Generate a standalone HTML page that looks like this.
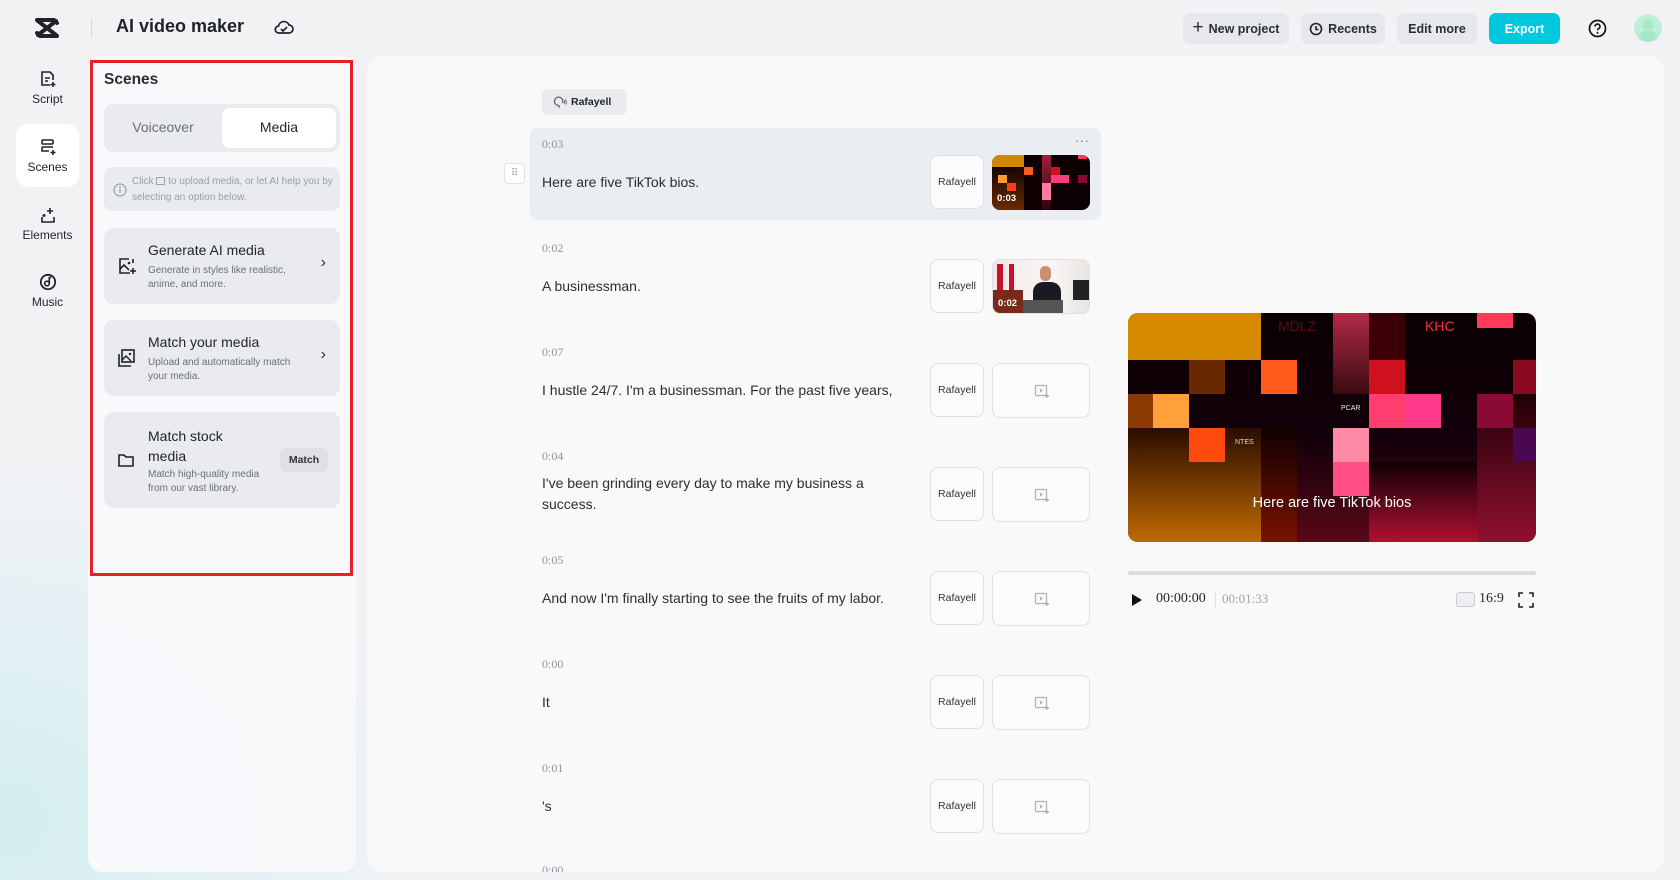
<!DOCTYPE html>
<html><head><meta charset="utf-8"><style>
*{box-sizing:border-box;margin:0;padding:0}
body{width:1680px;height:880px;overflow:hidden;font-family:"Liberation Sans",sans-serif;color:#1f2329;
background:radial-gradient(ellipse 420px 360px at 0px 820px,#d3eef2 0%,rgba(211,238,242,0) 100%),#f2f2f5;position:relative}
.abs{position:absolute}
.btn{position:absolute;top:13px;height:31px;border-radius:7px;background:#e6e8ec;font-size:12.5px;font-weight:bold;color:#2a2e33;display:flex;align-items:center;justify-content:center;gap:5px}
.nav{position:absolute;left:16px;width:63px;text-align:center;font-size:12px;color:#1f2329}
.nav svg{display:block;margin:0 auto 4px}
.card{position:absolute;left:104px;width:236px;background:#e9ebef;border-radius:10px}
.card .t{position:absolute;left:44px;font-size:14px;color:#1f2329}
.card .d{position:absolute;left:44px;font-size:10px;color:#6b7075;line-height:14px}
.card svg.ic{position:absolute;left:13px}
.card .ch{position:absolute;right:14px;font-size:16px;color:#333}
.row{position:absolute;left:530px;width:571px;height:92px;border-radius:8px}
.row .tm{position:absolute;left:12px;top:9px;font-family:"Liberation Serif",serif;font-size:12px;color:#8f959e}
.row .tx{position:absolute;left:12px;font-size:14px;color:#2a2e33;line-height:21px;width:380px}
.row .rf{position:absolute;left:400px;top:27px;width:54px;height:54px;border:1px solid #dfe1e5;border-radius:8px;background:#fbfbfc;font-size:10.5px;color:#333;display:flex;align-items:center;justify-content:center}
.row .th{position:absolute;left:462px;top:27px;width:98px;height:55px;border:1px solid #dfe1e5;border-radius:8px;background:#fbfbfc;overflow:hidden}
.c{position:absolute}
</style></head><body>

<svg class="abs" style="left:34px;top:17px" width="26" height="22" viewBox="0 0 26 22"><path d="M3 3h17l3 3M23 19H6l-3-3M4 4l18 14M22 4L4 18" stroke="#1f2329" stroke-width="4" fill="none" stroke-linecap="round"/></svg>
<div class="abs" style="left:91px;top:18px;width:1px;height:20px;background:#d8d9dd"></div>
<div class="abs" style="left:116px;top:16px;font-size:18px;font-weight:bold">AI video maker</div>
<svg class="abs" style="left:274px;top:18px" width="20" height="18" viewBox="0 0 20 18"><path d="M5 15h10a4 4 0 0 0 0-8 5.5 5.5 0 0 0-10.5 1A3.5 3.5 0 0 0 5 15z" fill="none" stroke="#1f2329" stroke-width="1.7"/><path d="M7 11l2 2 4-4" fill="none" stroke="#1f2329" stroke-width="1.7"/></svg>

<div class="btn" style="left:1183px;width:106px"><span style="font-size:19px;font-weight:normal;margin-top:-2px">+</span>New project</div>
<div class="btn" style="left:1301px;width:84px"><svg width="14" height="14" viewBox="0 0 14 14"><circle cx="7" cy="7" r="5.5" fill="none" stroke="#1f2329" stroke-width="1.6"/><path d="M7 4v3.5h2.5" stroke="#1f2329" stroke-width="1.6" fill="none"/></svg>Recents</div>
<div class="btn" style="left:1397px;width:80px">Edit more</div>
<div class="btn" style="left:1489px;width:71px;background:#00c8df;color:#fff">Export</div>
<svg class="abs" style="left:1588px;top:19px" width="19" height="19" viewBox="0 0 19 19"><circle cx="9.5" cy="9.5" r="8" fill="none" stroke="#111" stroke-width="1.7"/><path d="M7 7.5a2.5 2.5 0 1 1 3.3 2.4c-.6.3-.8.7-.8 1.4" fill="none" stroke="#111" stroke-width="1.6"/><circle cx="9.5" cy="13.8" r="1" fill="#111"/></svg>
<div class="abs" style="left:1634px;top:14px;width:28px;height:28px;border-radius:50%;background:#bdeed7;overflow:hidden"><div class="c" style="left:9px;top:6px;width:10px;height:9px;border-radius:3px;background:#a5e6c6"></div><div class="c" style="left:5px;top:16px;width:18px;height:14px;border-radius:9px 9px 0 0;background:#a5e6c6"></div></div>

<div class="nav" style="top:70px"><svg width="18" height="18" viewBox="0 0 18 18"><path d="M11 15H3V2h8l3 3v5" fill="none" stroke="#1f2329" stroke-width="1.6"/><path d="M6 8h5M6 11h3M14 12v5M11.5 14.5h5" stroke="#1f2329" stroke-width="1.6"/></svg>Script</div>
<div class="abs" style="left:16px;top:124px;width:63px;height:63px;background:#fff;border-radius:12px"></div>
<div class="nav" style="top:138px"><svg width="18" height="18" viewBox="0 0 18 18"><rect x="3" y="2" width="11" height="4" rx="1" fill="none" stroke="#1f2329" stroke-width="1.6"/><path d="M3 9h11M3 9v4h7M14 12v5M11.5 14.5h5" stroke="#1f2329" stroke-width="1.6" fill="none"/></svg>Scenes</div>
<div class="nav" style="top:206px"><svg width="18" height="18" viewBox="0 0 18 18"><path d="M3 11v5h12v-5" fill="none" stroke="#1f2329" stroke-width="1.6"/><path d="M11 2v6M8 5h6M5 8v3M3.5 9.5h3" stroke="#1f2329" stroke-width="1.6"/></svg>Elements</div>
<div class="nav" style="top:273px"><svg width="18" height="18" viewBox="0 0 18 18"><circle cx="9" cy="9" r="7.2" fill="none" stroke="#1f2329" stroke-width="1.8"/><circle cx="8" cy="10.5" r="2.3" fill="none" stroke="#1f2329" stroke-width="1.6"/><path d="M10.3 10.5V4.5h2" fill="none" stroke="#1f2329" stroke-width="1.6"/></svg>Music</div>

<div class="abs" style="left:88px;top:56px;width:268px;height:816px;background:rgba(250,250,252,0.93);border-radius:14px"></div>
<div class="abs" style="left:90px;top:60px;width:263px;height:516px;border:3px solid #e8202a"></div>
<div class="abs" style="left:104px;top:71px;font-size:15.5px;font-weight:bold;color:#2a2e33">Scenes</div>
<div class="abs" style="left:104px;top:104px;width:236px;height:48px;background:#e9ebef;border-radius:10px"></div>
<div class="abs" style="left:222px;top:108px;width:114px;height:40px;background:#fff;border-radius:8px"></div>
<div class="abs" style="left:104px;top:119px;width:118px;text-align:center;font-size:14px;color:#6b7075">Voiceover</div>
<div class="abs" style="left:222px;top:119px;width:114px;text-align:center;font-size:14px;color:#1f2329">Media</div>

<div class="abs" style="left:104px;top:167px;width:236px;height:44px;background:#e9ebef;border-radius:8px"></div>
<svg class="abs" style="left:113px;top:183px" width="14" height="14" viewBox="0 0 14 14"><circle cx="7" cy="7" r="6" fill="none" stroke="#9aa0a6" stroke-width="1.2"/><path d="M7 6v4" stroke="#9aa0a6" stroke-width="1.3"/><circle cx="7" cy="4.2" r=".8" fill="#9aa0a6"/></svg>
<div class="abs" style="left:132px;top:174px;font-size:10px;color:#9aa0a6;line-height:16px;width:205px">Click <span style="display:inline-block;width:9px;height:8px;border:1px solid #9aa0a6;border-radius:1px;vertical-align:-1px"></span> to upload media, or let AI help you by selecting an option below.</div>

<div class="card" style="top:228px;height:76px">
<svg class="ic" style="top:28px" width="20" height="20" viewBox="0 0 20 20"><path d="M12 3H3v14h10" fill="none" stroke="#1f2329" stroke-width="1.6"/><path d="M3 13l4-4 5 5" fill="none" stroke="#1f2329" stroke-width="1.6"/><circle cx="12" cy="7" r="1.3" fill="#1f2329"/><path d="M16 12v6M13 15h6M16 3v4" stroke="#1f2329" stroke-width="1.6"/></svg>
<div class="t" style="top:14px">Generate AI media</div><div class="d" style="top:36px">Generate in styles like realistic,<br>anime, and more.</div><div class="ch" style="top:26px">›</div></div>

<div class="card" style="top:320px;height:76px">
<svg class="ic" style="top:28px" width="20" height="20" viewBox="0 0 20 20"><rect x="5" y="2" width="12" height="12" fill="none" stroke="#1f2329" stroke-width="1.6"/><path d="M2 6v12h12" fill="none" stroke="#1f2329" stroke-width="1.6"/><path d="M5 12l4-4 5 5" fill="none" stroke="#1f2329" stroke-width="1.5"/><circle cx="13" cy="6" r="1.2" fill="#1f2329"/></svg>
<div class="t" style="top:14px">Match your media</div><div class="d" style="top:36px">Upload and automatically match<br>your media.</div><div class="ch" style="top:26px">›</div></div>

<div class="card" style="top:412px;height:96px">
<svg class="ic" style="top:40px" width="18" height="16" viewBox="0 0 18 16"><path d="M2 3h5l2 2h7v9H2z" fill="none" stroke="#1f2329" stroke-width="1.6"/></svg>
<div class="t" style="top:14px;line-height:20px">Match stock<br>media</div><div class="d" style="top:56px">Match high-quality media<br>from our vast library.</div>
<div class="abs" style="left:176px;top:36px;width:48px;height:24px;border-radius:6px;background:#dee0e4;font-size:10.5px;font-weight:bold;display:flex;align-items:center;justify-content:center;color:#333">Match</div></div>

<div class="abs" style="left:367px;top:56px;width:1297px;height:816px;background:#f9f9fa;border-radius:16px"></div>
<div class="abs" style="left:542px;top:89px;width:85px;height:26px;background:#e9ebef;border-radius:6px;font-size:10.5px;font-weight:bold;display:flex;align-items:center;gap:4px;padding-left:11px"><svg width="14" height="13" viewBox="0 0 14 13"><path d="M6 12V9.5A4.2 4.2 0 1 1 9.5 7" fill="none" stroke="#555" stroke-width="1.1"/><path d="M11 4.5q1 1.5 0 3M12.5 3.5q1.6 2.5 0 5" fill="none" stroke="#555" stroke-width=".9"/></svg>Rafayell</div>

<div class="abs" style="left:504px;top:163px;width:21px;height:21px;border:1px solid #dfe1e5;border-radius:4px;background:#fff;font-size:10px;color:#999;text-align:center;line-height:19px">⠿</div>

<div class="row" style="top:128px;background:#eaedf1">
<div class="tm">0:03</div><div class="abs" style="right:12px;top:4px;color:#888;font-size:14px">···</div>
<div class="tx" style="top:44px">Here are five TikTok bios.</div><div class="rf">Rafayell</div>
<div class="th" style="border:none;background:#0c0002">
<div class="c" style="left:0;top:0;width:32px;height:12px;background:#d08900"></div>
<div class="c" style="left:0;top:12px;width:32px;height:43px;background:linear-gradient(#150500,#6a2a00)"></div>
<div class="c" style="left:6px;top:20px;width:9px;height:8px;background:#ff9c30"></div>
<div class="c" style="left:15px;top:28px;width:9px;height:8px;background:#ff4010"></div>
<div class="c" style="left:32px;top:12px;width:9px;height:8px;background:#ff5a1a"></div>
<div class="c" style="left:50px;top:0;width:9px;height:55px;background:linear-gradient(#a0203a,#300010)"></div>
<div class="c" style="left:50px;top:28px;width:9px;height:17px;background:#ff7ca0"></div>
<div class="c" style="left:59px;top:20px;width:18px;height:8px;background:#ff3a80"></div>
<div class="c" style="left:59px;top:12px;width:9px;height:8px;background:#d0101e"></div>
<div class="c" style="left:86px;top:20px;width:9px;height:8px;background:#8a0a35"></div>
<div class="c" style="left:86px;top:0;width:9px;height:4px;background:#ff3a5a"></div>
<div class="abs" style="left:5px;top:38px;color:#fff;font-size:9.5px;font-weight:bold">0:03</div></div></div>

<div class="row" style="top:232px"><div class="tm">0:02</div><div class="tx" style="top:44px">A businessman.</div><div class="rf">Rafayell</div>
<div class="th" style="background:linear-gradient(90deg,#f0e8e8,#faf6f4 60%,#e8e4e2)">
<div class="c" style="left:4px;top:4px;width:6px;height:40px;background:#c8102a"></div>
<div class="c" style="left:16px;top:4px;width:5px;height:40px;background:#c8102a"></div>
<div class="c" style="left:0;top:30px;width:30px;height:25px;background:#7a2a1a"></div>
<div class="c" style="left:40px;top:22px;width:28px;height:33px;background:#1a1a22;border-radius:10px 10px 0 0"></div>
<div class="c" style="left:47px;top:6px;width:11px;height:15px;background:#c89070;border-radius:5px"></div>
<div class="c" style="left:30px;top:40px;width:40px;height:15px;background:#555"></div>
<div class="c" style="left:80px;top:20px;width:18px;height:20px;background:#222"></div>
<div class="abs" style="left:5px;top:38px;color:#fff;font-size:9.5px;font-weight:bold">0:02</div></div></div>

<div class="row" style="top:336px"><div class="tm">0:07</div><div class="tx" style="top:44px">I hustle 24/7. I'm a businessman. For the past five years,</div><div class="rf">Rafayell</div><div class="th"><svg class="abs" style="left:41px;top:20px" width="16" height="15" viewBox="0 0 16 15"><rect x="1.5" y="1.5" width="11" height="10" rx="1" fill="none" stroke="#aab0b6" stroke-width="1.2"/><path d="M6 4.5l3 2-3 2z" fill="#aab0b6"/><path d="M13 10v4M11 12h4" stroke="#aab0b6" stroke-width="1.2"/></svg></div></div>

<div class="row" style="top:440px"><div class="tm">0:04</div><div class="tx" style="top:33px;width:345px">I've been grinding every day to make my business a success.</div><div class="rf">Rafayell</div><div class="th"><svg class="abs" style="left:41px;top:20px" width="16" height="15" viewBox="0 0 16 15"><rect x="1.5" y="1.5" width="11" height="10" rx="1" fill="none" stroke="#aab0b6" stroke-width="1.2"/><path d="M6 4.5l3 2-3 2z" fill="#aab0b6"/><path d="M13 10v4M11 12h4" stroke="#aab0b6" stroke-width="1.2"/></svg></div></div>

<div class="row" style="top:544px"><div class="tm">0:05</div><div class="tx" style="top:44px">And now I'm finally starting to see the fruits of my labor.</div><div class="rf">Rafayell</div><div class="th"><svg class="abs" style="left:41px;top:20px" width="16" height="15" viewBox="0 0 16 15"><rect x="1.5" y="1.5" width="11" height="10" rx="1" fill="none" stroke="#aab0b6" stroke-width="1.2"/><path d="M6 4.5l3 2-3 2z" fill="#aab0b6"/><path d="M13 10v4M11 12h4" stroke="#aab0b6" stroke-width="1.2"/></svg></div></div>

<div class="row" style="top:648px"><div class="tm">0:00</div><div class="tx" style="top:44px">It</div><div class="rf">Rafayell</div><div class="th"><svg class="abs" style="left:41px;top:20px" width="16" height="15" viewBox="0 0 16 15"><rect x="1.5" y="1.5" width="11" height="10" rx="1" fill="none" stroke="#aab0b6" stroke-width="1.2"/><path d="M6 4.5l3 2-3 2z" fill="#aab0b6"/><path d="M13 10v4M11 12h4" stroke="#aab0b6" stroke-width="1.2"/></svg></div></div>

<div class="row" style="top:752px"><div class="tm">0:01</div><div class="tx" style="top:44px">'s</div><div class="rf">Rafayell</div><div class="th"><svg class="abs" style="left:41px;top:20px" width="16" height="15" viewBox="0 0 16 15"><rect x="1.5" y="1.5" width="11" height="10" rx="1" fill="none" stroke="#aab0b6" stroke-width="1.2"/><path d="M6 4.5l3 2-3 2z" fill="#aab0b6"/><path d="M13 10v4M11 12h4" stroke="#aab0b6" stroke-width="1.2"/></svg></div></div>

<div class="abs" style="left:542px;top:863px;font-family:'Liberation Serif',serif;font-size:12px;color:#8f959e;height:9px;overflow:hidden">0:00</div>

<div class="abs" style="left:1128px;top:313px;width:408px;height:229px;border-radius:10px;overflow:hidden;background:linear-gradient(#0a0002 0%,#12000a 55%,#5a0818 100%);font-size:7px;color:rgba(255,255,255,.5)">
<div class="c" style="left:0;top:0;width:133px;height:47px;background:#d68a00"></div>
<div class="c" style="left:0;top:115px;width:133px;height:114px;background:linear-gradient(#2a0c00,#c06a00)"></div>
<div class="c" style="left:133px;top:115px;width:36px;height:114px;background:linear-gradient(#100000,#7a1200)"></div>
<div class="c" style="left:205px;top:0;width:36px;height:81px;background:linear-gradient(#b02a45,#3a0a12)"></div>
<div class="c" style="left:241px;top:0;width:36px;height:47px;background:#3a0006"></div>
<div class="c" style="left:241px;top:149px;width:108px;height:80px;background:linear-gradient(#100004,#b01030)"></div>
<div class="c" style="left:349px;top:81px;width:59px;height:148px;background:linear-gradient(#200008,#901030)"></div>
<div class="c" style="left:0;top:81px;width:25px;height:34px;background:#8a3a00"></div>
<div class="c" style="left:61px;top:47px;width:36px;height:34px;background:#6a2800"></div>
<div class="c" style="left:133px;top:47px;width:36px;height:34px;background:#ff5a1a"></div>
<div class="c" style="left:241px;top:47px;width:36px;height:34px;background:#d0101e"></div>
<div class="c" style="left:385px;top:47px;width:23px;height:34px;background:#8a0820"></div>
<div class="c" style="left:25px;top:81px;width:36px;height:34px;background:#ffa03a"></div>
<div class="c" style="left:241px;top:81px;width:36px;height:34px;background:#ff3d6e"></div>
<div class="c" style="left:277px;top:81px;width:36px;height:34px;background:#ff3a8a"></div>
<div class="c" style="left:349px;top:81px;width:36px;height:34px;background:#8a0a35"></div>
<div class="c" style="left:385px;top:115px;width:23px;height:34px;background:#4a0850"></div>
<div class="c" style="left:61px;top:115px;width:36px;height:34px;background:#ff4a10"></div>
<div class="c" style="left:205px;top:115px;width:36px;height:34px;background:#ff8aa5"></div>
<div class="c" style="left:205px;top:149px;width:36px;height:34px;background:#ff4f86"></div>
<div class="c" style="left:349px;top:0;width:36px;height:15px;background:#ff3a5a"></div>
<div class="c" style="left:150px;top:5px;font-size:14px;color:#5a0a14">MDLZ</div>
<div class="c" style="left:297px;top:5px;font-size:14px;color:#ff2a4a">KHC</div>
<div class="c" style="left:107px;top:126px;color:#ddd">NTES</div>
<div class="c" style="left:213px;top:92px;color:#eee">PCAR</div>
<div class="c" style="left:0;top:182px;width:408px;text-align:center;font-size:14.5px;color:#fff">Here are five TikTok bios</div>
</div>

<div class="abs" style="left:1128px;top:571px;width:408px;height:4px;border-radius:2px;background:#dcdde0"></div>
<svg class="abs" style="left:1131px;top:593px" width="12" height="14" viewBox="0 0 12 14"><path d="M1 1l10 6-10 6z" fill="#111"/></svg>
<div class="abs" style="left:1156px;top:591px;font-family:'Liberation Serif',serif;font-size:14px;color:#1f2329">00:00:00</div>
<div class="abs" style="left:1215px;top:593px;width:1px;height:14px;background:#ddd"></div>
<div class="abs" style="left:1222px;top:591px;font-family:'Liberation Serif',serif;font-size:13px;color:#a0a5ab">00:01:33</div>
<div class="abs" style="left:1456px;top:592px;width:19px;height:15px;border:1px solid #c8cbd0;border-radius:3px;background:#eceef1"></div>
<div class="abs" style="left:1479px;top:591px;font-family:'Liberation Serif',serif;font-size:14px;color:#1f2329">16:9</div>
<svg class="abs" style="left:1518px;top:592px" width="16" height="16" viewBox="0 0 16 16"><path d="M1 5V1h4M11 1h4v4M15 11v4h-4M5 15H1v-4" fill="none" stroke="#222" stroke-width="1.6"/></svg>
</body></html>
